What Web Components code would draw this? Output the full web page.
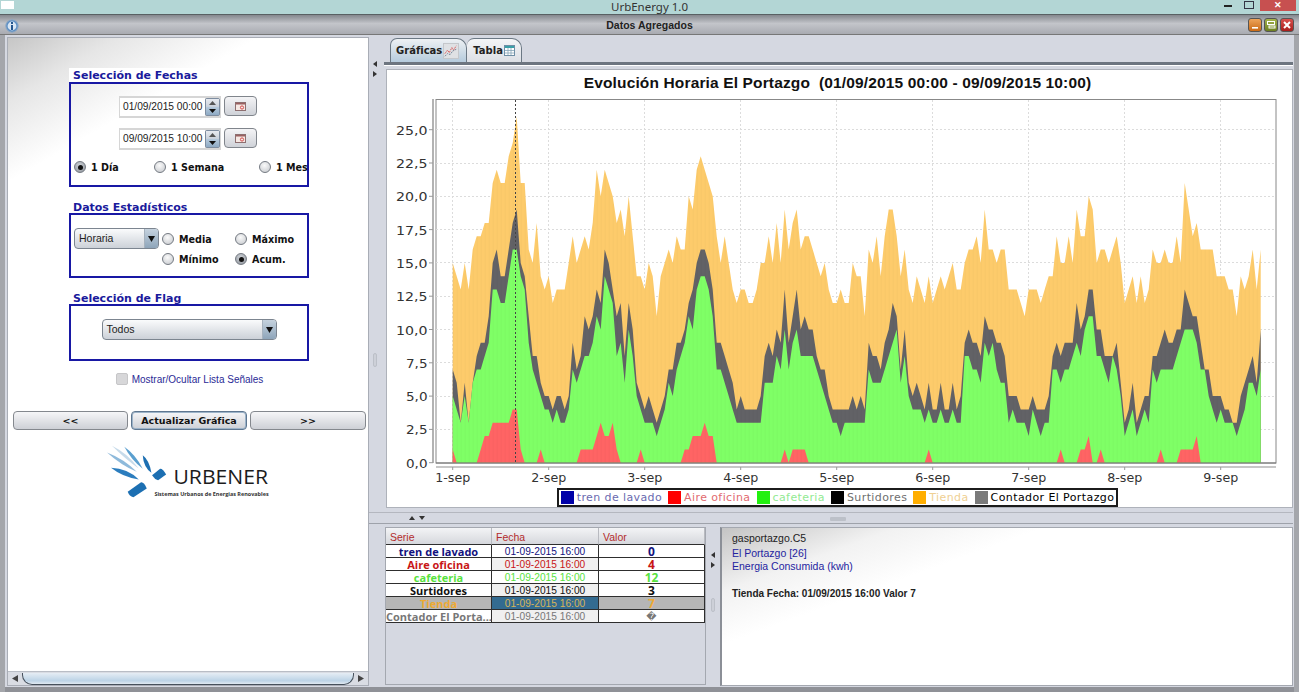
<!DOCTYPE html>
<html lang="es"><head><meta charset="utf-8"><title>UrbEnergy 1.0</title>
<style>
html,body{margin:0;height:692px;overflow:hidden;background:#d5d8e1;font-family:"Liberation Sans",Arial,sans-serif}
body{display:flex;flex-direction:column}
</style></head><body>
<ue-titlebar>UrbEnergy 1.0</ue-titlebar>
<ue-framebar>Datos Agregados</ue-framebar>
<ue-desktop>
  <ue-side-panel slot="left">
    <ue-section label="Selección de Fechas" height="105">
      <ue-date value="01/09/2015 00:00"></ue-date>
      <ue-date value="09/09/2015 10:00" style="margin-top:10px"></ue-date>
      <ue-radio-grid columns="80px 105px auto" style="margin:7px 0 0 3px">
        <ue-radio checked>1 Día</ue-radio><ue-radio>1 Semana</ue-radio><ue-radio>1 Mes</ue-radio>
      </ue-radio-grid>
    </ue-section>
    <ue-section label="Datos Estadísticos" height="65" gap="13" row nudge>
      <ue-combo width="85" style="margin-left:3px">Horaria</ue-combo>
      <ue-radio-grid columns="73px auto" style="margin:1px 0 0 3px">
        <ue-radio>Media</ue-radio><ue-radio>Máximo</ue-radio><ue-radio>Mínimo</ue-radio><ue-radio checked>Acum.</ue-radio>
      </ue-radio-grid>
    </ue-section>
    <ue-section label="Selección de Flag" height="57" gap="13" center nudge>
      <ue-combo width="175">Todos</ue-combo>
    </ue-section>
    <ue-check>Mostrar/Ocultar Lista Señales</ue-check>
    <ue-button-row>
      <ue-button>&lt;&lt;</ue-button><ue-button focused>Actualizar Gráfica</ue-button><ue-button>&gt;&gt;</ue-button>
    </ue-button-row>
    <ue-logo></ue-logo>
    <ue-scrollbar slot="bar"></ue-scrollbar>
  </ue-side-panel>
  <ue-vsplit slot="split" arrow-top="24" dot="316" shift="4"></ue-vsplit>
  <ue-tabs slot="tabs">
    <ue-tab active icon="chart">Gráficas</ue-tab><ue-tab icon="table">Tabla</ue-tab>
  </ue-tabs>
  <ue-chart slot="chart"></ue-chart>
  <ue-hsplit slot="hsplit"></ue-hsplit>
  <ue-series-table slot="table"></ue-series-table>
  <ue-vsplit slot="split2" arrow-top="25" dot="71" shift="0"></ue-vsplit>
  <ue-info slot="info">
    <div>gasportazgo.C5</div>
    <ue-link style="margin-top:2px">El Portazgo [26]</ue-link>
    <ue-link>Energia Consumida (kwh)</ue-link>
    <b style="display:block;margin-top:14px;font-size:10px">Tienda Fecha: 01/09/2015 16:00 Valor 7</b>
  </ue-info>
</ue-desktop>
<script>
const BOLD='"DejaVu Sans",Verdana,sans-serif';
function el(name,render){customElements.define(name,class extends HTMLElement{
  connectedCallback(){if(this.shadowRoot)return;this.attachShadow({mode:'open'}).innerHTML=render(this)}
})}
el('ue-titlebar',()=>`<style>
:host{display:flex;height:14px;flex:none;background:#b3d6d5;border-bottom:1px solid #596063;position:relative;font:11.5px "Noto Sans",sans-serif;color:#333;line-height:13px;justify-content:center}
.ic{position:absolute;left:1px;top:1px;width:13px;height:8px;background:#fff}
.min{position:absolute;left:1224px;top:5px;width:8px;height:2px;background:#222}
.res{position:absolute;left:1244px;top:1px;width:8px;height:6px;border:1px solid #334}
.cl{position:absolute;left:1260px;top:0;width:36px;height:11px;background:#c75050;color:#fff;text-align:center;font:bold 9px/10px "Liberation Sans",sans-serif}
</style><span class="ic"></span><slot></slot><span class="min"></span><span class="res"></span><span class="cl">✕</span>`);
el('ue-framebar',()=>`<style>
:host{display:flex;flex:none;height:20px;align-items:center;justify-content:center;position:relative;background:linear-gradient(#85888e,#c3c5ca 45%,#a9abb1);border-bottom:1px solid #777;font:bold 10.5px "Liberation Sans",sans-serif;color:#222;box-sizing:border-box}
.i{position:absolute;left:5px;top:4px}
.b{position:absolute;right:5px;top:3px;display:flex;gap:2px}
.b span{width:14px;height:14px;border-radius:3px;box-sizing:border-box;border:1px solid #555;display:block}
</style><svg class="i" width="14" height="14" viewBox="0 0 14 14"><circle cx="7" cy="7" r="6.2" fill="#5d8fc4" stroke="#8fa9c4"/><circle cx="7" cy="7" r="4.4" fill="#d8e6f4"/><rect x="6" y="6" width="2" height="5" fill="#24568f"/><rect x="6" y="3" width="2" height="2" fill="#24568f"/></svg>
<slot></slot>
<div class="b"><span style="background:linear-gradient(#eda45a,#c96a16)"><svg width="12" height="12" style="display:block"><rect x="3" y="8" width="6" height="1.6" fill="#fff"/></svg></span><span style="background:linear-gradient(#a4b34c,#6d7f20)"><svg width="12" height="12" style="display:block"><rect x="2.5" y="2.5" width="7" height="3" fill="none" stroke="#fff"/><rect x="4" y="7" width="6" height="2" fill="none" stroke="#fff"/></svg></span><span style="background:linear-gradient(#d9504d,#a81e1c)"><svg width="12" height="12" style="display:block"><path d="M3 3l6 6M9 3l-6 6" stroke="#fff" stroke-width="2"/></svg></span></div>`);
el('ue-desktop',()=>`<style>
:host{flex:1;display:grid;min-height:0;grid-template-columns:362px 16px 1fr;grid-template-rows:25px 7px 439px 19px 159px;padding:2px 6px 6px 7px;box-sizing:border-box;position:relative;background:#d5d8e1;
 box-shadow:inset 5px 0 0 #a4a6ab,inset -5px 0 0 #a4a6ab,inset 0 -5px 0 #8f9197}
.left{grid-row:1/6;grid-column:1;display:flex;min-height:0}
.sp{grid-row:1/6;grid-column:2;display:flex}
.tabs{grid-row:1;grid-column:3}
.rule{grid-row:2;grid-column:3;margin-left:-1px;height:3px;background:#6d7580;box-shadow:0 1px 0 #fff}
.ch{grid-row:3;grid-column:3;margin:0 0 0 1px;display:flex}
.hs{grid-row:4;grid-column:2/4;display:flex}
.low{grid-row:5;grid-column:3;display:grid;grid-template-columns:321px 14px 1fr}
</style>
<div class="left"><slot name="left"></slot></div><div class="sp"><slot name="split"></slot></div>
<div class="tabs"><slot name="tabs"></slot></div><div class="rule"></div>
<div class="ch"><slot name="chart"></slot></div><div class="hs"><slot name="hsplit"></slot></div>
<div class="low"><slot name="table"></slot><slot name="split2"></slot><slot name="info"></slot></div>`);
el('ue-side-panel',()=>`<style>
:host{flex:1;display:flex;flex-direction:column;border:1px solid #a9adb6;background:linear-gradient(150deg,#c6c6c6 0,#e6e6e6 55px,#fff 125px);font:10px "Liberation Sans",sans-serif;min-width:0}
.c{flex:1;padding:30px 2px 0 5px}
</style><div class="c"><slot></slot></div><slot name="bar"></slot>`);
el('ue-section',h=>`<style>
:host{display:block;margin:0 0 12px 56px;width:240px}
h3{margin:0;display:block;width:fit-content;padding:0 8px 0 4px;height:14px;font:bold 11px/${h.hasAttribute('nudge')?17:15}px ${BOLD};color:#1a1a9c;background:#fff}
.b{height:${h.getAttribute('height')}px;box-sizing:border-box;border:2px solid #1818a4;padding-top:${h.getAttribute('gap')||12}px;${h.hasAttribute('row')?'display:flex;align-items:flex-start;':''}${h.hasAttribute('center')?'display:flex;justify-content:center;align-items:flex-start;':''}}
</style><h3>${h.getAttribute('label')}</h3><div class="b"><slot></slot></div>`);
el('ue-date',h=>`<style>
:host{display:flex;justify-content:center;gap:3px;margin-left:-2px}
.w{display:flex;width:102px;height:22px;background:#d6d6d6;padding:2px 1px;box-sizing:border-box}
.t{flex:1;min-width:0;background:#fff;font:10.2px/18px "Liberation Sans",sans-serif;color:#222;padding-left:3px;white-space:nowrap}
.s{width:15px;flex:none;display:flex;flex-direction:column;border:1px solid #7e8da0;border-radius:2px;box-sizing:border-box}
.s i{flex:1;display:flex;align-items:center;justify-content:center;background:linear-gradient(#e8ebf0,#c8d0da)}
.s i+i{background:linear-gradient(#b6cadc,#8eaac4)}
.btn{width:33px;height:20px;border:1px solid #80858c;border-radius:4px;background:linear-gradient(#f4f4f6,#cfd2d8);display:flex;align-items:center;justify-content:center;box-sizing:border-box}
</style><div class="w"><div class="t">${h.getAttribute('value')}</div><div class="s"><i><svg width="7" height="4"><path d="M3.5 0L7 4H0z" fill="#555"/></svg></i><i><svg width="7" height="4"><path d="M0 0h7L3.500 4z" fill="#111"/></svg></i></div></div>
<div class="btn"><svg width="11" height="9" viewBox="0 0 11 9"><rect x=".5" y=".5" width="10" height="8" fill="#f6e9e4" stroke="#8d6f70"/><rect x="1" y="1" width="9" height="1.5" fill="#9a6060"/><circle cx="7" cy="5.500" r="1.600" fill="none" stroke="#d24a4a"/></svg></div>`);
el('ue-radio-grid',h=>`<style>:host{display:grid;grid-template-columns:${h.getAttribute('columns')};grid-auto-rows:20px}</style><slot></slot>`);
el('ue-radio',h=>`<style>
:host{display:flex;align-items:center;gap:5px;font:bold 9.6px ${BOLD};color:#111;white-space:nowrap}
.r{width:12px;height:12px;border-radius:50%;border:1px solid #747a82;box-sizing:border-box;background:radial-gradient(circle at 45% 35%,#fafafa,#c3c6cb);display:flex;align-items:center;justify-content:center;flex:none}
.on{background:radial-gradient(circle at 45% 35%,#cfd3d8,#8b9098)}
.on::after{content:"";width:5px;height:5px;border-radius:50%;background:#111}
</style><span class="r ${h.hasAttribute('checked')?'on':''}"></span><slot></slot>`);
el('ue-combo',h=>`<style>
:host{display:flex;width:${h.getAttribute('width')}px;height:21px;border:1px solid #7c8590;border-radius:4px;box-sizing:border-box;background:linear-gradient(#fafbfc,#ccd1d8);font:10.5px/19px "Liberation Sans",sans-serif;color:#222;overflow:hidden;flex:none}
.t{flex:1;padding-left:4px}
.a{width:13px;background:linear-gradient(#c5d2de,#8ea5ba);display:flex;align-items:center;justify-content:center;border-left:1px solid #a6b2be}
</style><div class="t"><slot></slot></div><div class="a"><svg width="7" height="6"><path d="M0 0h7L3.500 6z" fill="#111"/></svg></div>`);
el('ue-check',()=>`<style>
:host{display:flex;justify-content:center;align-items:center;gap:4px;margin:2px 0 0 0;height:12px;font:10px "Liberation Sans",sans-serif;color:#2a2a96}
i{width:12px;height:12px;background:#d7d7d9;border:1px solid #c6c6c8;box-sizing:border-box;border-radius:2px}
</style><i></i><slot></slot>`);
el('ue-button-row',()=>`<style>:host{display:grid;grid-template-columns:115px 116px 116px;gap:3px;margin:26px 0 0 0}</style><slot></slot>`);
el('ue-button',h=>`<style>
:host{display:flex;height:19px;align-items:center;justify-content:center;border:1px solid #84888e;border-radius:4px;box-sizing:border-box;background:linear-gradient(#f6f6f8,#cdd0d6);font:bold 9.5px ${BOLD};color:#111;${h.hasAttribute('focused')?'border-color:#5e7690;box-shadow:inset 0 0 0 1px #9db4c9;':''}}
</style><slot></slot>`);
el('ue-logo',()=>`<style>:host{display:block;margin:15px 0 0 93px;width:167px;height:54px}svg{display:block}</style>
<svg width="167" height="54" viewBox="320 170 500 161">
<path d="M338 172Q385 195 418 240Q378 212 338 172z" fill="#c7dbea"/>
<path d="M375 175Q410 200 430 241Q396 215 375 175z" fill="#5a9fcf"/>
<path d="M323 192Q375 212 412 250Q365 230 323 192z" fill="#8ebadb"/>
<path d="M430 200Q450 215 456 253Q432 235 430 200z" fill="#1c6fb2"/>
<path d="M335 238Q385 240 418 273Q370 266 335 238z" fill="#2b7dbe"/>
<path d="M458 260L482 241Q490 240 500 258L476 275Q465 272 458 260z" fill="#1c6fb2"/>
<path d="M385 310L425 281Q434 280 442 300L402 326Q390 324 385 310z" fill="#1c6fb2"/>
<text x="522" y="285" font-family="Open Sans" font-size="62" fill="#1c1c1c" textLength="283" lengthAdjust="spacingAndGlyphs">URBENER</text>
<text x="465" y="322" font-family="Open Sans" font-weight="700" font-size="17" fill="#333" textLength="342" lengthAdjust="spacingAndGlyphs">Sistemas Urbanos de Energias Renovables</text>
</svg>`);
el('ue-scrollbar',()=>`<style>
:host{display:flex;height:13px;flex:none;align-items:center;background:#d9dce3;border-top:1px solid #b9bdc5}
.a{width:14px;display:flex;justify-content:center;flex:none}
.t{flex:1;height:12px;border:1px solid #46505c;border-top:0;border-radius:0 0 10px 10px;background:linear-gradient(#e6edf4,#bcd3e6 70%,#dfe8f1);box-sizing:border-box}
</style><span class="a"><svg width="6" height="7"><path d="M6 0v7L0 3.500z" fill="#444"/></svg></span><div class="t"></div><span class="a"><svg width="6" height="7"><path d="M0 0v7l6-3.500z" fill="#444"/></svg></span>`);
el('ue-vsplit',h=>`<style>
:host{display:block;flex:1;min-height:0;background:#d5d8e1;padding-right:${h.getAttribute('shift')}px;box-sizing:border-box}
.a{display:flex;flex-direction:column;align-items:center;gap:4px;padding-top:${h.getAttribute('arrow-top')}px}
.d{display:block;width:4px;height:14px;margin:${h.getAttribute('dot')-h.getAttribute('arrow-top')-16}px auto 0;border:1px solid #bcc0c8;background:#cdd0d8;box-sizing:border-box;border-radius:2px}
</style><div class="a"><svg width="4" height="6" style="display:block"><path d="M4 0v6L0 3z" fill="#333"/></svg><svg width="4" height="6" style="display:block"><path d="M0 0v6l4-3z" fill="#333"/></svg></div><span class="d"></span>`);
el('ue-hsplit',()=>`<style>
:host{flex:1;display:flex;align-items:center;position:relative;padding-left:40px;box-sizing:border-box;height:19px;background:linear-gradient(#d5d8e1 4px,#b4b7bf 4px,#b4b7bf 5px,#d5d8e1 5px,#d5d8e1 15px,#9ea2aa 15px,#9ea2aa 16px,#d5d8e1 16px)}
.a{display:flex;gap:4px}
.a svg{display:block}
.d{position:absolute;left:461px;top:9px;width:16px;height:4px;background:#bcc0c8;border-radius:1px}
</style><span class="a"><svg width="6" height="4"><path d="M0 4h6L3 0z" fill="#333"/></svg><svg width="6" height="4"><path d="M0 0h6L3 4z" fill="#333"/></svg></span><span class="d"></span>`);
el('ue-tabs',()=>`<style>:host{display:flex;padding:0 0 0 5px;align-items:flex-end;height:25px;box-sizing:border-box}</style><slot></slot>`);
el('ue-tab',h=>{
 const active=h.hasAttribute('active');
 const icon=h.getAttribute('icon')==='chart'
 ?`<svg width="16" height="16" viewBox="0 0 16 16" style="display:block;box-sizing:border-box;background:#dfe1e4;border:1px solid #c4c7cb"><path d="M1 11l3-4 2 3 3-6 2 3 3-5" fill="none" stroke="#d84a4a" stroke-dasharray="2 1"/><path d="M1 14l3-3 3 1 3-4 4-2" fill="none" stroke="#6b7c90" stroke-dasharray="2 1"/></svg>`
 :`<svg width="11" height="11" viewBox="0 0 11 11" style="display:block"><rect x=".5" y=".5" width="10" height="10" fill="#fff" stroke="#6f8fa6"/><rect x="1" y="1" width="9" height="2" fill="#3ba0a8"/><path d="M1 5.500h9M1 8h9M4 3v7M7 3v7" stroke="#86a5b8" stroke-width=".8"/></svg>`;
 return `<style>
:host{display:flex;align-items:center;height:24px;padding:0 ${active?7:6}px 0 5px;gap:1px;box-sizing:border-box;border:1px solid #6b7884;border-bottom:0;border-radius:7px 10px 0 0;font:bold 10px ${BOLD};color:#222;background:${active?'linear-gradient(#eef1f4,#c3d4e2 75%,#b5cbdd)':'linear-gradient(#f4f5f7,#dcdfe5)'};${active?'':'border-left:0;padding-left:6px'}}
</style><slot></slot>${icon}`});
/* hourly stacked values, read from the reference */
const TOP=[15,14,13,15,13,16,17,17,18,18,21,22,21,21,23,24,26,21,21,16,15,18,14,13,14,12,13,13,13,15,17,15,16,17,16,18,22,20,22,21,20,18,19,17,20,17,14,14,13,15,14,11,14,15,16,15,17,16,16,20,19,22,23,22,21,20,17,15,17,15,13,12,13,13,12,12,13,15,15,17,15,18,15,19,16,18,19,16,17,17,16,15,14,15,13,12,12,13,12,12,15,14,14,11,16,15,17,14,17,19,19,17,14,16,13,12,14,13,12,14,12,13,14,13,14,15,13,13,15,16,16,17,15,19,16,16,15,16,16,13,13,13,12,11,13,13,13,12,13,14,14,17,15,15,17,15,19,17,17,20,19,15,16,16,15,16,17,15,12,13,14,12,14,12,13,16,15,15,16,15,15,17,15,21,19,17,18,16,16,16,16,14,14,14,13,13,11,14,13,14,16,13,16];
const GRAY=[7,6,3,6,3,6,8,9,9,11,15,16,14,14,16,18,19,15,14,11,8,8,6,5,5,4,5,5,4,5,9,7,8,11,10,11,13,12,16,15,13,11,12,8,12,10,6,5,4,5,4,3,4,5,7,7,9,9,10,12,13,15,16,16,15,13,9,9,8,7,6,4,5,4,4,4,4,5,8,9,8,10,9,13,9,11,13,10,11,10,10,8,7,7,5,4,4,4,4,4,5,4,5,4,9,8,8,7,9,10,12,11,7,10,6,5,6,5,4,6,4,4,6,4,4,6,4,5,9,10,9,9,8,11,10,10,9,9,8,5,5,5,4,4,4,5,4,4,4,5,8,9,8,9,9,9,12,10,11,13,13,10,10,8,8,8,9,6,3,4,6,3,4,5,5,8,8,9,10,9,9,10,10,13,12,11,11,9,7,7,5,5,5,4,4,3,3,5,6,7,8,6,10];
const GREEN=[5,4,3,5,3,6,7,7,8,9,13,13,12,12,14,16,16,14,13,9,7,6,5,4,4,3,4,3,3,4,7,6,7,8,8,9,11,10,14,13,12,8,9,6,10,8,5,4,3,3,3,2,3,4,6,5,7,8,9,11,10,13,14,14,13,11,7,7,6,5,4,3,3,3,3,3,3,3,6,6,6,8,7,10,7,9,10,8,8,8,8,7,6,5,4,3,3,2,3,3,3,3,3,3,7,6,6,6,7,8,9,10,6,8,5,4,4,4,3,4,3,3,4,3,3,4,3,3,8,8,7,7,6,9,8,9,7,6,6,3,4,3,3,3,2,4,3,2,3,3,7,7,6,7,7,8,9,8,10,11,11,8,8,7,6,8,7,5,2,3,4,2,3,4,3,7,6,7,7,7,7,8,9,10,10,10,9,7,7,5,4,3,4,3,3,3,2,3,4,6,6,5,7];
const RED_AT={0:1,7:1,8:2,9:2,10:3,11:3,12:3,13:3,14:3,15:4,16:4,17:1,22:1,32:1,33:1,34:1,35:1,36:2,37:3,38:2,39:2,40:3,41:1,47:1,58:1,59:1,60:2,61:2,62:2,63:3,64:2,65:2,83:1,85:1,86:1,87:1,88:1,119:1,152:1,157:1,158:1,159:2,162:1,177:1,182:1,183:1,184:1,185:1,186:2};
const X=h=>452.7+4*h,Y=v=>462.7-13.32*v;
function area(a){let p=`${X(0)},${Y(0)} `;a.forEach((v,i)=>p+=`${X(i).toFixed(1)},${Y(v).toFixed(1)} `);return p+`${X(a.length-1)},${Y(0)}`}
el('ue-chart',()=>{
 const red=TOP.map((_,i)=>RED_AT[i]||0);
 let grid='',labels='';
 ['0,0','2,5','5,0','7,5','10,0','12,5','15,0','17,5','20,0','22,5','25,0'].forEach((t,i)=>{const y=Y(i*2.5);
  if(i)grid+=`<line x1="436" x2="1276" y1="${y}" y2="${y}"/>`;
  labels+=`<line x1="429" x2="433" y1="${y}" y2="${y}" stroke="#999"/><text x="427.500" y="${y+5}" text-anchor="end" textLength="${t.length>3?31.500:21.500}" lengthAdjust="spacingAndGlyphs">${t}</text>`});
 for(let d=0;d<9;d++){const x=X(d*24);grid+=`<line x1="${x}" x2="${x}" y1="100" y2="463"/>`;
  labels+=`<line x1="${x}" x2="${x}" y1="467" y2="470" stroke="#999"/><text x="${x}" y="482" text-anchor="middle" textLength="35" lengthAdjust="spacingAndGlyphs">${d+1}-sep</text>`}
 const items=[['#0000a8','tren de lavado','#6a6ab0'],['#ff0000','Aire oficina','#e26a70'],['#22f010','cafeteria','#92ea92'],['#000','Surtidores','#6e6e6e'],['#ffae00','Tienda','#efd093'],['#7a7a7a','Contador El Portazgo','#000']];
 return `<style>
:host{flex:1;display:flex;flex-direction:column;align-items:center;background:#fff;box-sizing:border-box;border:1px solid #aeb2ba;box-shadow:inset 0 0 0 1px #fff;overflow:hidden;min-width:0}
h2{margin:5px 4px 2px 0;font:bold 15.5px/15px "Liberation Sans",sans-serif;color:#111;white-space:pre;height:15px;letter-spacing:.14px}
svg{display:block;flex:none}
text{font:12px "DejaVu Sans",sans-serif;fill:#333}
.leg{display:flex;align-items:center;height:19px;box-sizing:border-box;border:2px solid #1c1c1c;padding:0 2px 0 2px;font:11px ${BOLD};white-space:nowrap;margin-right:4px;background:#fff}
.leg i{width:13px;height:13px;margin-right:3px;flex:none}
.leg span{margin-right:6px;letter-spacing:.4px}
.leg span:last-child{margin-right:0}
</style>
<h2>Evolución Horaria El Portazgo  (01/09/2015 00:00 - 09/09/2015 10:00)</h2>
<svg width="905" height="396" viewBox="387 92 905 396">
<defs><pattern id="st" width="4" height="10" patternUnits="userSpaceOnUse" x="452.700"><rect width="1" height="10" fill="#000" opacity=".025"/></pattern></defs>
<rect x="436" y="99.500" width="840" height="363.500" fill="#fff" stroke="#888"/>
<g stroke="#dcdcdc" stroke-dasharray="2 2" shape-rendering="crispEdges">${grid}</g>
<polygon points="${area(TOP)}" fill="#fdcb6b"/>
<polygon points="${area(GRAY)}" fill="#626266"/>
<polygon points="${area(GREEN)}" fill="#7fff66"/>
<polygon points="${area(red)}" fill="#ff6464"/>
<polygon points="${area(TOP)}" fill="url(#st)"/>
<line x1="515.500" x2="515.500" y1="100" y2="463" stroke="#444" stroke-dasharray="2 2" shape-rendering="crispEdges"/>
<line x1="436" x2="1276" y1="463" y2="463" stroke="#777"/>
<path d="M433 99V463" stroke="#999" stroke-width="1.500" fill="none"/><path d="M436 467H1276" stroke="#b5b5b5" stroke-width="1.500" fill="none"/>
${labels}
</svg>
<div class="leg">${items.map(i=>`<i style="background:${i[0]}"></i><span style="color:${i[2]}">${i[1]}</span>`).join('')}</div>`});
el('ue-series-table',()=>{
 const rows=[['tren de lavado','0','#12127e'],['Aire oficina','4','#c81616'],['cafeteria','12','#58e23e'],['Surtidores','3','#111'],['Tienda','7','#eeaa33'],['Contador El Porta...','\uFFFD','#777']];
 return `<style>
:host{display:block;background:#d5d8e1;border:1px solid #a4a8b0;box-sizing:border-box;height:158px;overflow:hidden}
.g{display:grid;grid-template-columns:106px 107px 106px;grid-auto-rows:13px}
.g>div{border-bottom:1px solid #2e2e2e;border-right:1px solid #2e2e2e;background:#fff;box-sizing:border-box;white-space:nowrap;text-align:center;height:13px;padding-top:1px}
.hdr{display:grid;grid-template-columns:106px 107px 106px;height:17px}
.hdr div{display:flex;align-items:center;padding:1px 0 0 4px;background:linear-gradient(#f3f4f6,#d6d8dd);color:#b32c2c;font:10.5px "Liberation Sans",sans-serif;border-right:1px solid #b8bac0;border-bottom:1px solid #2e2e2e;box-sizing:border-box}
.g>.s{font:bold 11px/11px "Open Sans",sans-serif}
.g>.d{font:10.2px/11px "Liberation Sans",sans-serif}
.g>.v{font:bold 12px/11px "Open Sans",sans-serif}
.g>.alt{background:#f0f0f0}
.g>.sel{background:#b6b6b6}
.g>.selb{background:#336b90;color:#d8b458!important}
.g>.u{font:10px/11px "DejaVu Sans",sans-serif}
</style><div class="hdr"><div>Serie</div><div>Fecha</div><div>Valor</div></div>
<div class="g">${rows.map((r,i)=>{const sel=i===4;const alt=i%2==1;return `<div class="s ${sel?'sel':''}" style="color:${r[2]}">${r[0]}</div><div class="d ${sel?'selb':alt?'alt':''}" style="color:${r[2]}">01-09-2015 16:00</div><div class="v ${sel?'sel':''} ${i==5?'u':''}" style="color:${r[2]}">${r[1]}</div>`}).join('')}</div>`});
el('ue-info',()=>`<style>
:host{display:block;height:159px;box-sizing:border-box;border:1px solid #a4a8b0;border-left:2px solid #8b8f97;background:linear-gradient(160deg,#c4c4c4 0,#f2f2f2 60px,#fff 110px);padding:4px 10px;font:10.5px/13px "Liberation Sans",sans-serif;color:#222}
</style><slot></slot>`);
el('ue-link',()=>`<style>:host{display:block;color:#2424a0}</style><slot></slot>`);
</script>
</body></html>
